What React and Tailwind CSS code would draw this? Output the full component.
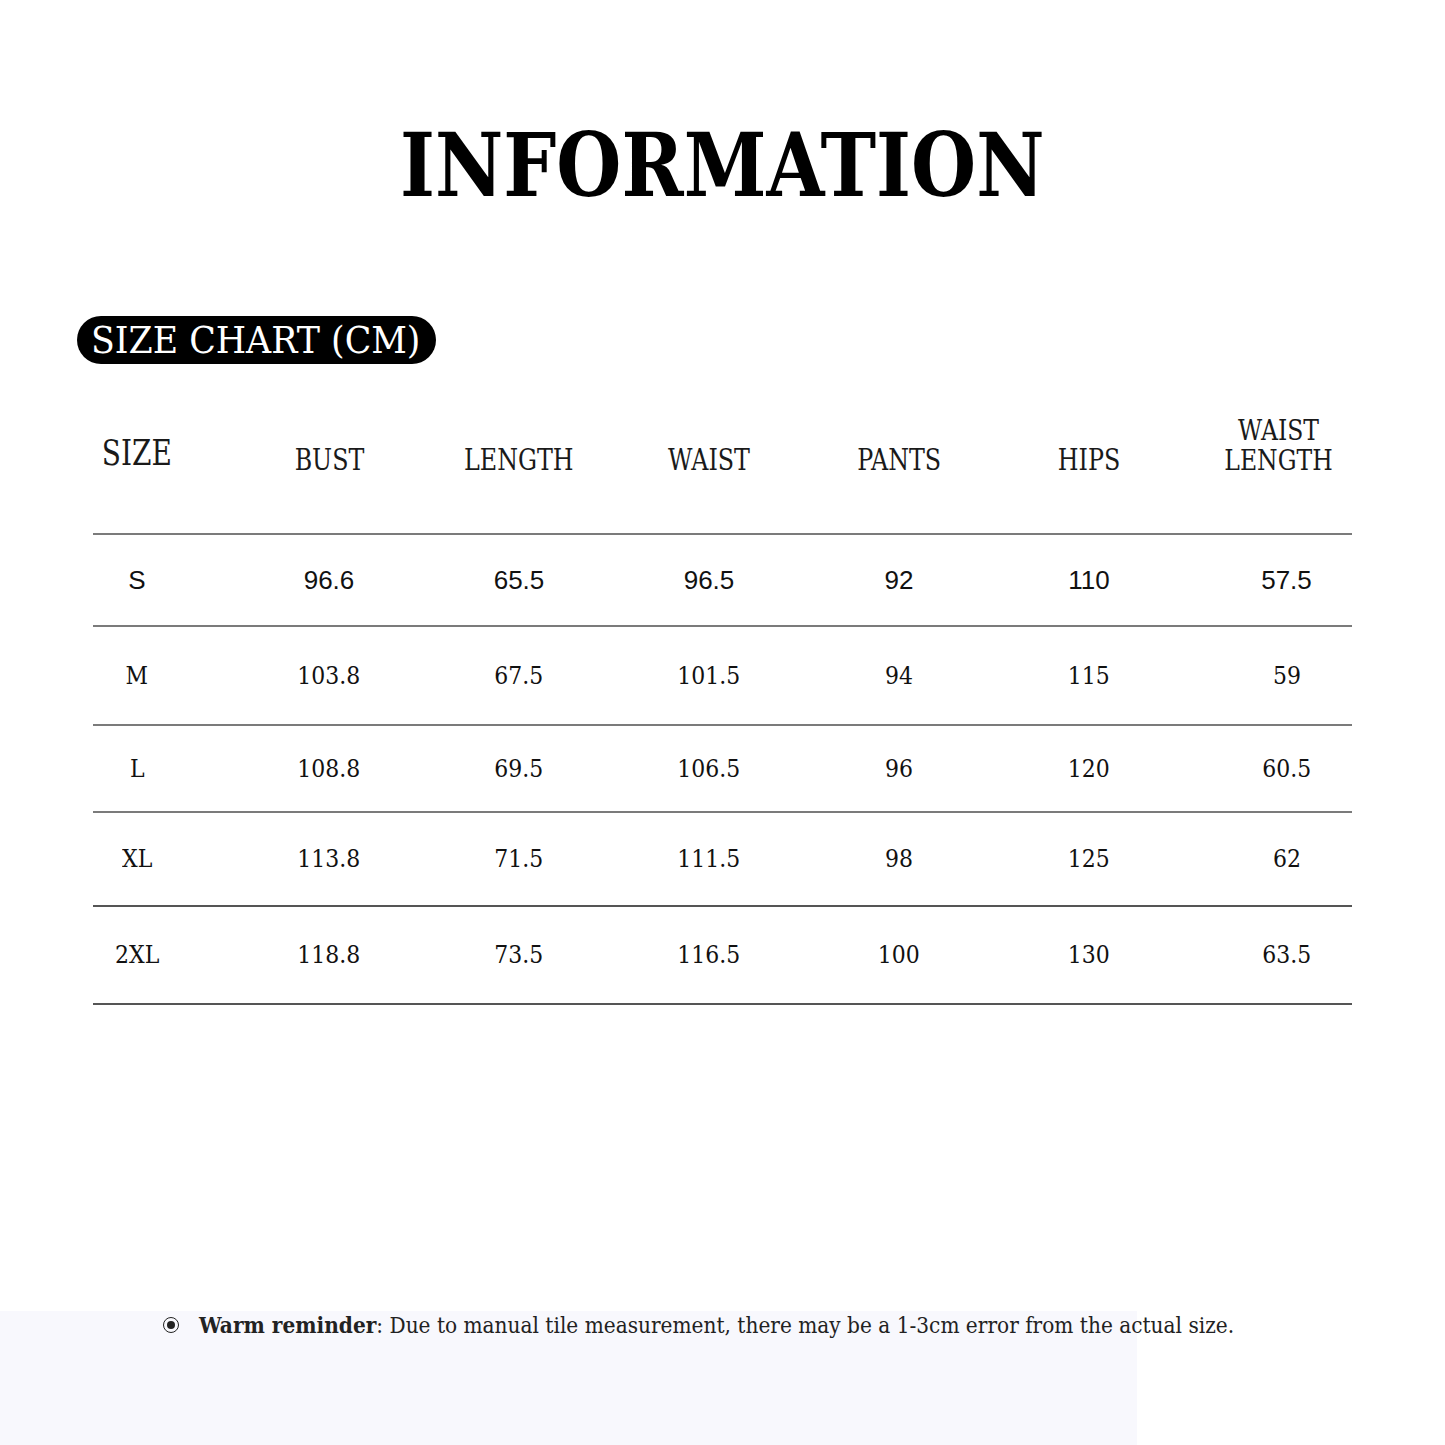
import React from 'react';

const SLAB = { fontFamily: '"DejaVu Serif", "Liberation Serif", serif' };
const SANS = { fontFamily: '"Liberation Sans", Arial, sans-serif' };

const HEAD = ['BUST', 'LENGTH', 'WAIST', 'PANTS', 'HIPS'];

const ROWS = [
  { size: 'S', vals: ['96.6', '65.5', '96.5', '92', '110', '57.5'], h: 'h-[92px]' },
  { size: 'M', vals: ['103.8', '67.5', '101.5', '94', '115', '59'], h: 'h-[99px]' },
  { size: 'L', vals: ['108.8', '69.5', '106.5', '96', '120', '60.5'], h: 'h-[87px]' },
  { size: 'XL', vals: ['113.8', '71.5', '111.5', '98', '125', '62'], h: 'h-[94px]' },
  { size: '2XL', vals: ['118.8', '73.5', '116.5', '100', '130', '63.5'], h: 'h-[98px]' },
];

function Cell({ children, first, last, className = '' }) {
  const w = first ? 'w-[141px] pr-[53px]' : last ? 'w-[205px]' : 'w-[190px]';
  return <div className={`${w} shrink-0 flex justify-center ${className}`}>{children}</div>;
}

function Value({ v, sans }) {
  // la fila S viene en una sans, el resto en slab
  if (sans) {
    return <span className="text-[26px] text-[#111]" style={SANS}>{v}</span>;
  }
  return <span className="inline-block text-[25px] text-[#111] scale-x-[0.88]" style={SLAB}>{v}</span>;
}

export default function App() {
  return (
    <div className="w-[1445px] h-[1445px] bg-white flex flex-col text-[#111]" style={SLAB}>
      {/* titulo */}
      <h1 className="mt-[118px] h-[94px] flex items-center justify-center">
        <span className="inline-block text-[88px] font-bold leading-none text-black scale-x-[0.85]">INFORMATION</span>
      </h1>

      {/* pill */}
      <div className="mt-[104px] ml-[77px] w-[359px] h-[48px] rounded-full bg-black flex items-center pl-[14px] whitespace-nowrap">
        <span className="inline-block origin-left text-[37px] leading-none text-white scale-x-[0.94]">SIZE CHART (CM)</span>
      </div>

      {/* tabla */}
      <div className="ml-[93px] w-[1259px] mt-[41px]">
        <div className="h-[130px] flex items-end pb-[57px] border-b-2 border-[#7b7b7b] text-[#1a1a1a]">
          <Cell first className="mb-[5px]">
            <span className="inline-block text-[35px] leading-none scale-x-[0.8]">SIZE</span>
          </Cell>
          {HEAD.map(h => (
            <Cell key={h} className="mb-[1px]">
              <span className="inline-block text-[29px] leading-none scale-x-[0.82]">{h}</span>
            </Cell>
          ))}
          <Cell last>
            <div className="flex flex-col items-center text-[28px] leading-[30px] scale-x-[0.84] mr-[16px]">
              <span>WAIST</span>
              <span>LENGTH</span>
            </div>
          </Cell>
        </div>

        {ROWS.map((r, ri) => (
          <div key={r.size} className={`${r.h} flex items-center border-b-2 ${ri > 2 ? 'border-[#555]' : 'border-[#7b7b7b]'}`}>
            <Cell first>
              <Value v={r.size} sans={ri === 0} />
            </Cell>
            {r.vals.map((v, i) => (
              <Cell key={i} last={i === 5}>
                <Value v={v} sans={ri === 0} />
              </Cell>
            ))}
          </div>
        ))}
      </div>

      {/* aviso */}
      <div className="mt-auto h-[134px] w-[1137px] bg-[#f8f8fd]">
        <div className="flex items-center h-[28px] ml-[163px] whitespace-nowrap text-[#222]">
          <span className="w-[16px] h-[16px] shrink-0 rounded-full border-[1.5px] border-[#222] flex items-center justify-center">
            <span className="w-[8px] h-[8px] rounded-full bg-[#222]" />
          </span>
          <span className="ml-[20px] inline-block origin-left text-[22px] leading-none scale-x-[0.915]">
            <b className="font-bold">Warm reminder</b>: Due to manual tile measurement, there may be a 1-3cm error from the actual size.
          </span>
        </div>
      </div>
    </div>
  );
}
